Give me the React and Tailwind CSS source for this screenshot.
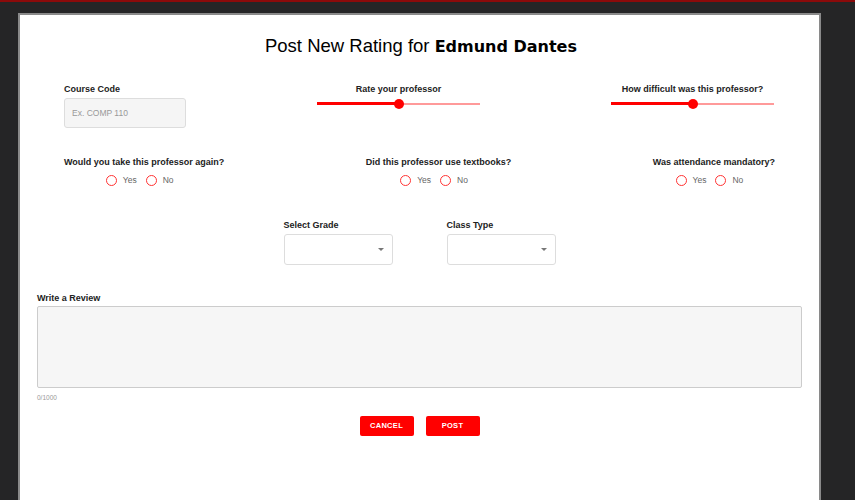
import React from 'react'

const Slider = ({ label, value }) => (
  <div className="flex flex-col items-center w-[163px]">
    <div className="text-[9px] font-bold text-[#222] mt-[1px]">{label}</div>
    <div className="relative w-full h-[10px] mt-[2px]">
      <div className="absolute left-0 right-0 top-[4px] h-[2px] bg-[#ff9a9a]" />
      <div className="absolute left-0 top-[3px] h-[3px] bg-[#ff0000]" style={{ width: `${value}%` }} />
      <div
        className="absolute top-0 w-[10px] h-[10px] rounded-full bg-[#ff0000] -ml-[5px]"
        style={{ left: `${value}%` }}
      />
    </div>
  </div>
)

const Radio = ({ label }) => (
  <label className="flex items-center gap-[6px]">
    <span className="w-[11px] h-[11px] rounded-full border-[1.5px] border-[#f33]" />
    <span className="text-[8.5px] text-[#666]">{label}</span>
  </label>
)

const YesNo = ({ label }) => (
  <div className="flex flex-col items-center">
    <div className="text-[9px] font-bold text-[#222]">{label}</div>
    <div className="flex gap-[9px] mt-[5px] mr-[9px]">
      <Radio label="Yes" />
      <Radio label="No" />
    </div>
  </div>
)

const Select = ({ label }) => (
  <div className="flex flex-col">
    <div className="text-[9px] font-bold text-[#222]">{label}</div>
    <div className="mt-[2px] w-[109px] h-[31px] border border-[#ddd] rounded-[3px] flex items-center justify-end pr-[8px]">
      <span className="w-0 h-0 border-l-[3px] border-r-[3px] border-t-[3px] border-l-transparent border-r-transparent border-t-[#777]" />
    </div>
  </div>
)

export default function App() {
  return (
    <div className="w-[855px] h-[500px] bg-[#252526] overflow-hidden flex flex-col" style={{ fontFamily: '"Liberation Sans", Arial, sans-serif' }}>
      <div className="h-[2px] bg-[#8b0a0a]" />
      <div className="ml-[18px] mt-[11px] w-[803px] flex-1 bg-white border-l-2 border-r-2 border-t-2 border-[#8a8a8a] px-[44px] pt-[19px]">
        {/* Title */}
        <h1 className="text-center text-[18.5px] text-black leading-[24px] mr-[-3px]">
          Post New Rating for{' '}
          <span className="font-bold text-[16px]" style={{ fontFamily: '"Comic Sans MS", "DejaVu Sans", sans-serif' }}>
            Edmund Dantes
          </span>
        </h1>

        {/* Row 1 */}
        <div className="flex justify-between items-start mt-[23px] pr-[1px]">
          <div className="flex flex-col">
            <div className="text-[9px] font-bold text-[#222] mt-[1px]">Course Code</div>
            <input
              placeholder="Ex. COMP 110"
              className="mt-[1px] w-[122px] h-[30px] bg-[#f5f5f5] border border-[#ddd] rounded-[3px] px-[7px] text-[8.5px] placeholder:text-[#999] outline-none"
            />
          </div>
          <Slider label="Rate your professor" value={50} />
          <Slider label="How difficult was this professor?" value={50} />
        </div>

        {/* Row 2 */}
        <div className="flex justify-between mt-[28px]">
          <YesNo label="Would you take this professor again?" />
          <YesNo label="Did this professor use textbooks?" />
          <YesNo label="Was attendance mandatory?" />
        </div>

        {/* Row 3 */}
        <div className="flex justify-center gap-[54px] mt-[32px]">
          <Select label="Select Grade" />
          <Select label="Class Type" />
        </div>

        {/* Review */}
        <div className="mx-[-27px] mt-[27px]">
          <div className="text-[9px] font-bold text-[#222]">Write a Review</div>
          <textarea className="block mt-[0px] w-full h-[82px] bg-[#f6f6f6] border border-[#ccc] rounded-[2px] resize-none outline-none" />
          <div className="text-[6.5px] text-[#999] mt-[5px]">0/1000</div>
        </div>

        {/* Buttons */}
        <div className="flex justify-center gap-[12px] mt-[13px]">
          <button className="w-[54px] h-[20px] bg-[#ff0000] rounded-[2px] text-white text-[7.5px] font-bold tracking-[0.3px]">CANCEL</button>
          <button className="w-[54px] h-[20px] bg-[#ff0000] rounded-[2px] text-white text-[7.5px] font-bold tracking-[0.3px]">POST</button>
        </div>
      </div>
    </div>
  )
}
